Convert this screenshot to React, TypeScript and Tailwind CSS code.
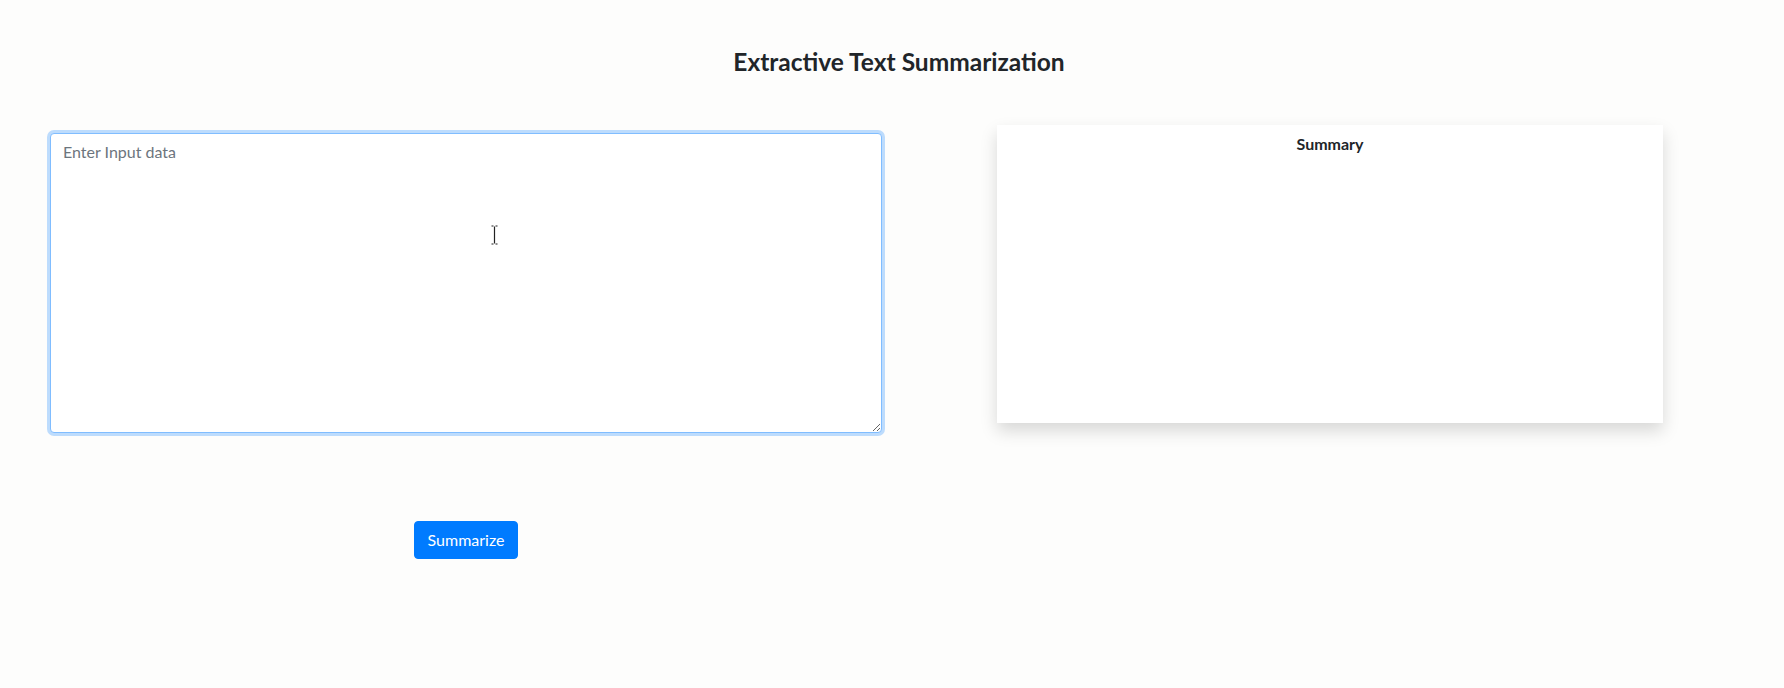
export default function App() {
  return (
    <div className="min-h-[688px] bg-[#fdfdfc] font-['Lato',sans-serif] text-[#212529]">
      {/* Title */}
      <h1 className="pt-[47px] text-center text-[24.5px] font-bold leading-[1.2] pl-[14px]">
        Extractive Text Summarization
      </h1>

      <div className="mt-[49px] flex items-start">
        {/* Input column */}
        <div className="ml-[50px] flex w-[832px] flex-col items-center">
          <div className="relative mt-[8px] w-full">
            <textarea
              placeholder="Enter Input data"
              className="block h-[300px] w-full rounded border border-[#80bdff] bg-white px-3 py-1.5 text-base leading-6 text-[#495057] shadow-[0_0_0_3px_rgba(0,123,255,0.25)] outline-none placeholder:text-[#6c757d]"
            />
            {/* mouse cursor */}
            <svg
              className="pointer-events-none absolute left-[441px] top-[92px]"
              width="7"
              height="20"
              viewBox="0 0 7 20"
            >
              <path
                d="M0.5 1H2.5M4.5 1H6.5M3.5 1.5V18.5M0.5 19H2.5M4.5 19H6.5"
                stroke="#222"
                strokeWidth="1.2"
                fill="none"
              />
            </svg>
          </div>
          <button className="mt-[88px] rounded border border-[#007bff] bg-[#007bff] px-[13px] py-1.5 text-base leading-6 text-white">
            Summarize
          </button>
        </div>

        {/* Summary card */}
        <div className="ml-[115px] h-[298px] w-[666px] bg-white pt-[7px] text-center shadow-[0_8px_16px_rgba(0,0,0,0.15)]">
          <h5 className="text-base font-bold leading-6">Summary</h5>
        </div>
      </div>
    </div>
  );
}
